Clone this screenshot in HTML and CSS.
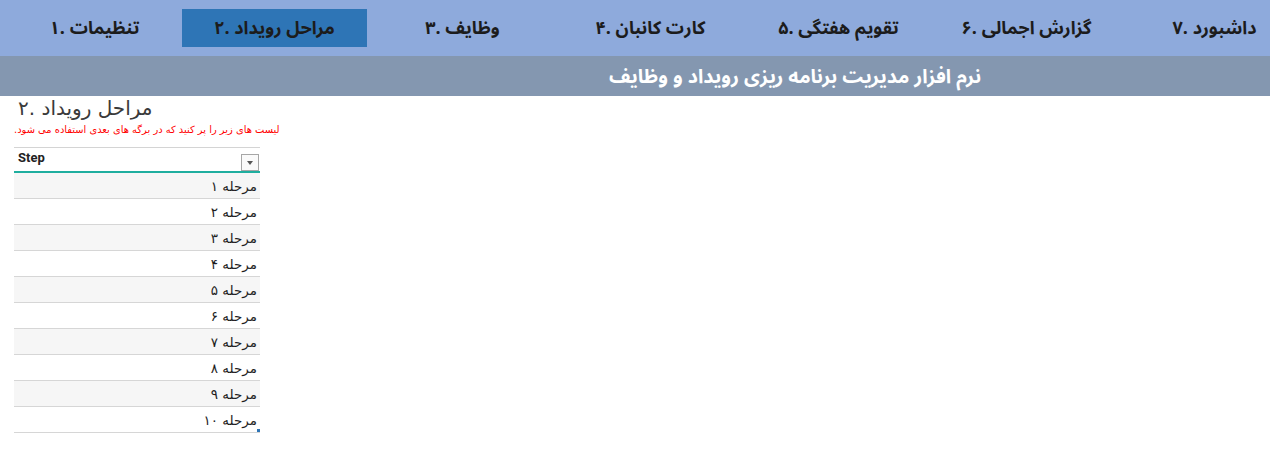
FILE: index.html
```html
<!DOCTYPE html>
<html lang="fa">
<head>
<meta charset="utf-8">
<link rel="stylesheet" href="styles.css">
</head>
<body>
<nav class="tabs">
  <div class="tab first" dir="ltr">۱. تنظیمات</div>
  <div class="tab active" dir="ltr">۲. مراحل رویداد</div>
  <div class="tab" dir="ltr">۳. وظایف</div>
  <div class="tab" dir="ltr">۴. کارت کانبان</div>
  <div class="tab" dir="ltr">۵. تقویم هفتگی</div>
  <div class="tab" dir="ltr">۶. گزارش اجمالی</div>
  <div class="tab" dir="ltr">۷. داشبورد</div>
</nav>
<header class="titlebar">
  <span class="title" dir="rtl">نرم افزار مدیریت برنامه ریزی رویداد و وظایف</span>
</header>
<main class="content">
  <h1 class="heading" dir="ltr">۲. مراحل رویداد</h1>
  <p class="note" dir="rtl">لیست های زیر را پر کنید که در برگه های بعدی استفاده می شود.</p>
  <div class="table">
    <div class="thead">
      <span class="th">Step</span>
      <span class="filter"><span class="caret"></span></span>
    </div>
    <div class="row odd" dir="rtl">مرحله ۱</div>
    <div class="row" dir="rtl">مرحله ۲</div>
    <div class="row odd" dir="rtl">مرحله ۳</div>
    <div class="row" dir="rtl">مرحله ۴</div>
    <div class="row odd" dir="rtl">مرحله ۵</div>
    <div class="row" dir="rtl">مرحله ۶</div>
    <div class="row odd" dir="rtl">مرحله ۷</div>
    <div class="row" dir="rtl">مرحله ۸</div>
    <div class="row odd" dir="rtl">مرحله ۹</div>
    <div class="row last" dir="rtl">مرحله ۱۰<span class="resize"></span></div>
  </div>
</main>
</body>
</html>
```

FILE: styles.css
```css
html, body {
  margin: 0;
  padding: 0;
  background: #ffffff;
  font-family: "Noto Sans Arabic", "DejaVu Sans", "Liberation Sans", sans-serif;
}

.tabs {
  height: 56px;
  background: #8eaadc;
  display: grid;
  grid-template-columns: repeat(7, 185px);
  column-gap: 3px;
  padding: 9px 0 10px;
  box-sizing: border-box;
  margin-left: -6px;
  width: calc(100% + 6px);
  overflow: hidden;
}

.tab {
  display: flex;
  align-items: center;
  justify-content: center;
  font-size: 18px;
  font-weight: bold;
  color: #1c1c1c;
  white-space: nowrap;
}

.tab.first {
  padding-left: 16px;
}

.tab.active {
  background: #2e75b6;
}

.titlebar {
  height: 40px;
  background: #8497b0;
  display: flex;
  align-items: center;
  justify-content: center;
  padding-left: 320px;
}

.title {
  color: #ffffff;
  font-size: 19.5px;
  font-weight: bold;
  white-space: nowrap;
}

.content {
  padding: 0 0 0 14px;
}

.heading {
  margin: 0;
  padding: 0 0 0 4px;
  height: 25px;
  line-height: 25px;
  font-family: "DejaVu Sans", sans-serif;
  font-size: 20px;
  font-weight: normal;
  color: #3a3a3a;
}

.note {
  margin: 2px 0 0;
  width: 270px;
  height: 13px;
  line-height: 13px;
  font-family: "DejaVu Sans", sans-serif;
  font-size: 9.9px;
  color: #ff0000;
  text-align: left;
  white-space: nowrap;
}

.table {
  margin-top: 11px;
  width: 246px;
}

.thead {
  border-top: 1px solid #d4d4d4;
  border-bottom: 2px solid #1fae9f;
  display: flex;
  align-items: center;
  justify-content: space-between;
  padding-left: 4px;
  box-sizing: border-box;
  height: 26px;
}

.th {
  font-family: Roboto, "Liberation Sans", sans-serif;
  font-weight: bold;
  font-size: 13px;
  color: #222;
  margin-top: -4px;
}

.filter {
  width: 16px;
  height: 15px;
  border: 1px solid #a6a6a6;
  background: #fafafa;
  margin: 6px 1px 0 0;
  display: flex;
  align-items: center;
  justify-content: center;
  align-self: flex-start;
}

.caret {
  width: 0;
  height: 0;
  border-left: 3px solid transparent;
  border-right: 3px solid transparent;
  border-top: 4px solid #555;
}

.row {
  height: 26px;
  box-sizing: border-box;
  border-bottom: 1px solid #d6d6d6;
  display: flex;
  align-items: center;
  padding-right: 3px;
  font-family: "DejaVu Sans", sans-serif;
  font-size: 13.5px;
  color: #1e1e1e;
  position: relative;
}

.row.odd {
  background: #f6f6f6;
}

.resize {
  position: absolute;
  right: 0;
  bottom: 0;
  width: 3px;
  height: 3px;
  background: #2e75b6;
}
```
